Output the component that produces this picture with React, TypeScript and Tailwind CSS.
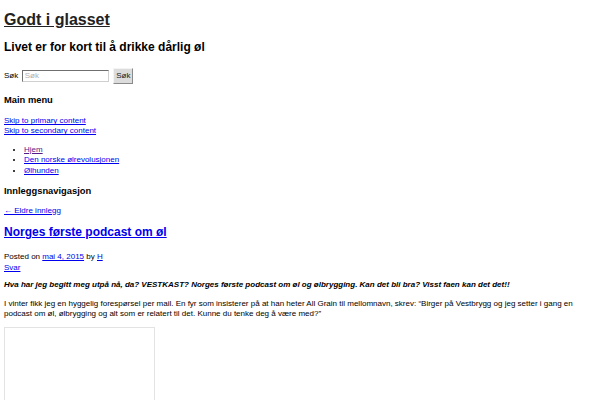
export default function App() {
  return (
    <div className="h-screen overflow-hidden bg-white px-[4px] pt-[10.7px] font-['Liberation_Sans',Arial,sans-serif] text-[8px] leading-[10px] text-black">
      <header>
        <h1 className="text-[16px] font-bold leading-[18.4px]">
          <a href="#" className="text-[#222] underline">Godt i glasset</a>
        </h1>
        <h2 className="mt-[11.7px] text-[12px] font-bold leading-[13.8px]">
          Livet er for kort til å drikke dårlig øl
        </h2>

        <form className="mt-[13.4px] flex h-[16px] items-center" onSubmit={(e) => e.preventDefault()}>
          <label htmlFor="s">Søk</label>
          <input
            id="s"
            type="text"
            placeholder="Søk"
            className="ml-[3.5px] h-[12px] w-[87px] border border-t-[#6f6f6f] border-l-[#6f6f6f] border-r-[#d0d0d0] border-b-[#d0d0d0] bg-white px-[2px] text-[8px] leading-[10px] placeholder:text-[#b0b0b0] outline-none"
          />
          <button
            type="submit"
            className="ml-[4.6px] h-[16px] w-[20px] border border-t-[#f4f4f4] border-l-[#f4f4f4] border-r-[#8a8a8a] border-b-[#8a8a8a] bg-[#dcdcdc] text-center text-[8px] leading-[14px] text-[#222]"
          >
            Søk
          </button>
        </form>

        <nav>
          <h3 className="mt-[11.1px] text-[9.36px] font-bold leading-[10.76px]">Main menu</h3>
          <div className="mt-[10.4px]">
            <a href="#" className="text-[#0000ee] underline">Skip to primary content</a>
          </div>
          <div>
            <a href="#" className="text-[#0000ee] underline">Skip to secondary content</a>
          </div>
          <ul className="mt-[8.7px] list-disc pl-[20px] leading-[10.5px]">
            <li>
              <a href="#" className="text-[#551a8b] underline">Hjem</a>
            </li>
            <li>
              <a href="#" className="text-[#0000ee] underline">Den norske ølrevolusjonen</a>
            </li>
            <li>
              <a href="#" className="text-[#0000ee] underline">Ølhunden</a>
            </li>
          </ul>
        </nav>
      </header>

      <nav>
        <h3 className="mt-[9.6px] text-[9.36px] font-bold leading-[10.76px]">Innleggsnavigasjon</h3>
        <div className="mt-[9.1px]">
          <a href="#" className="text-[#0000ee] underline">← Eldre innlegg</a>
        </div>
      </nav>

      <article>
        <h2 className="mt-[10.5px] text-[12px] font-bold leading-[13.8px]">
          <a href="#" className="text-[#0000ee] underline">Norges første podcast om øl</a>
        </h2>
        <div className="mt-[12.1px] leading-[10.5px]">
          <div>
            Posted on <a href="#" className="text-[#0000ee] underline">mai 4, 2015</a> by{" "}
            <a href="#" className="text-[#0000ee] underline">H</a>
          </div>
          <div>
            <a href="#" className="text-[#0000ee] underline">Svar</a>
          </div>
        </div>

        <p className="mt-[7px] font-bold italic">
          Hva har jeg begitt meg utpå nå, da? VESTKAST? Norges første podcast om øl og ølbrygging. Kan det bli bra? Visst faen kan det det!!
        </p>
        <p className="mt-[8.3px]">
          I vinter fikk jeg en hyggelig forespørsel per mail. En fyr som insisterer på at han heter All Grain til mellomnavn, skrev: “Birger på Vestbrygg og jeg setter i gang en podcast om øl, ølbrygging og alt som er relatert til det. Kunne du tenke deg å være med?”
        </p>
        <div className="mt-[8.7px] h-[150px] w-[151px] border border-[#e3e3e3] bg-white" />
      </article>
    </div>
  );
}
